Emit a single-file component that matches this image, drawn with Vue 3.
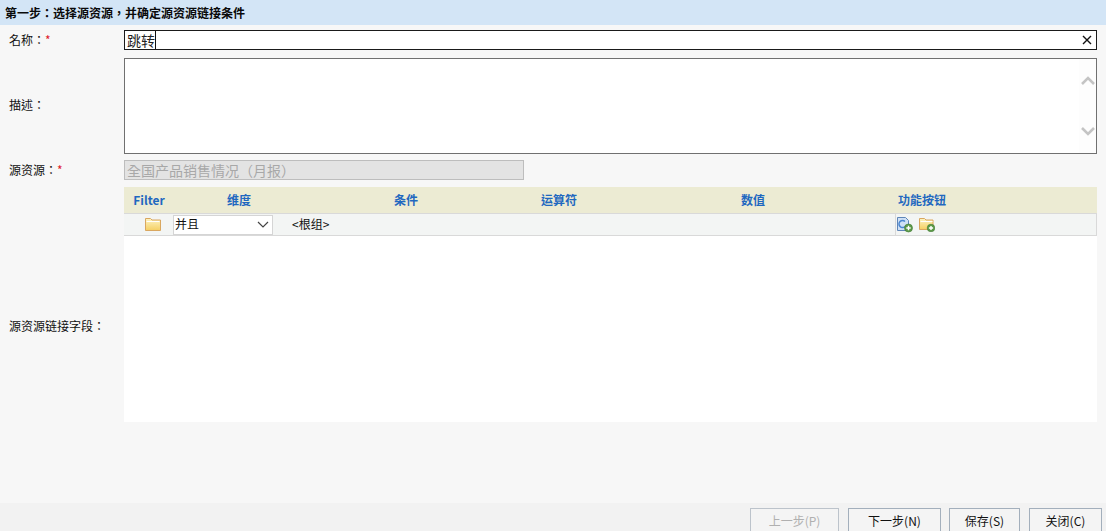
<script setup>
const columns = [
  { label: 'Filter', cls: '' },
  { label: '维度', cls: '' },
  { label: '条件', cls: '' },
  { label: '运算符', cls: '' },
  { label: '数值', cls: '' },
  { label: '功能按钮', cls: 'left' }
]
const buttons = [
  { label: '上一步(P)', cls: 'prev', disabled: true },
  { label: '下一步(N)', cls: 'next', disabled: false },
  { label: '保存(S)', cls: 'save', disabled: false },
  { label: '关闭(C)', cls: 'close', disabled: false }
]
</script>

<template>
  <div class="page">
    <div class="title">第一步：选择源资源，并确定源资源链接条件</div>
    <div class="form">
      <div class="label name-label">名称：<span class="req">*</span></div>
      <div class="name-input">
        <span class="value">跳转</span><span class="caret"></span>
        <svg class="clear" width="10" height="10" viewBox="0 0 10 10"><path d="M1 1l8 8M9 1l-8 8" stroke="#111" stroke-width="1.4" fill="none"/></svg>
      </div>

      <div class="label desc-label">描述：</div>
      <div class="textarea">
        <div class="scroll">
          <svg width="14" height="9" viewBox="0 0 14 9"><path d="M1 8l6-6 6 6" stroke="#c4c4c4" stroke-width="2.6" fill="none"/></svg>
          <svg width="14" height="9" viewBox="0 0 14 9"><path d="M1 1l6 6 6-6" stroke="#c4c4c4" stroke-width="2.6" fill="none"/></svg>
        </div>
      </div>

      <div class="label src-label">源资源：<span class="req">*</span></div>
      <div class="readonly">全国产品销售情况（月报）</div>

      <div class="label link-label">源资源链接字段：</div>
      <div class="table">
        <div class="thead">
          <div v-for="c in columns" :key="c.label" class="th" :class="c.cls">{{ c.label }}</div>
        </div>
        <div class="row">
          <div class="folder-cell">
            <svg width="16" height="13" viewBox="0 0 16 13">
              <defs><linearGradient id="fg" x1="0" y1="0" x2="0" y2="1"><stop offset="0" stop-color="#fdf4c4"/><stop offset="1" stop-color="#f5cf62"/></linearGradient></defs>
              <path d="M.5 12.500V.5h5l1.500 1.500h8.500v10.500z" fill="url(#fg)" stroke="#d9a760"/>
              <path d="M1.500 3.500h13" stroke="#fff" fill="none"/>
            </svg>
          </div>
          <div class="select">
            <span class="select-text">并且</span>
            <svg width="12" height="7" viewBox="0 0 12 7"><path d="M1 1l5 5 5-5" stroke="#444" stroke-width="1.200" fill="none"/></svg>
          </div>
          <div class="root">&lt;根组&gt;</div>
          <div class="actions">
            <svg width="18" height="17" viewBox="0 0 18 17">
              <path d="M1.500 1.500h8l3 3v10h-11z" fill="#cfe0f5" stroke="#5f86b8"/>
              <path d="M9 5.500a3.500 3.500 0 1 0 0 5" stroke="#4a86d0" stroke-width="1.600" fill="none"/>
              <circle cx="12.500" cy="12" r="4" fill="#5d9a48" stroke="#3f7a34" stroke-width=".6"/>
              <path d="M12.500 9.800v4.400M10.300 12h4.400" stroke="#fff" stroke-width="1.400"/>
            </svg>
            <svg class="add-folder" width="16" height="14" viewBox="0 0 16 14">
              <path d="M.5 11.500V.5h5l1.500 1.500h7v9.500z" fill="url(#fg)" stroke="#d9a760"/>
              <path d="M1.500 3.500h12" stroke="#fff" fill="none"/>
              <circle cx="12" cy="10" r="3.800" fill="#5d9a48" stroke="#3f7a34" stroke-width=".6"/>
              <path d="M12 7.900v4.200M9.900 10h4.200" stroke="#fff" stroke-width="1.400"/>
            </svg>
          </div>
        </div>
        <div class="blank"></div>
      </div>
    </div>
    <div class="footer">
      <button v-for="b in buttons" :key="b.label" class="btn" :class="b.cls" :disabled="b.disabled">{{ b.label }}</button>
    </div>
  </div>
</template>

<style>
html, body { margin: 0; background: #f7f7f7; overflow: hidden; }
</style>

<style scoped>
.page {
  width: 1106px;
  height: 531px;
  display: flex;
  flex-direction: column;
  overflow: hidden;
  background: #f7f7f7;
  color: #111;
  font: 12px/16px "Noto Sans CJK TC", "Liberation Sans", sans-serif;
}
.title {
  height: 25px;
  line-height: 25px;
  padding-left: 5px;
  flex: none;
  background: #d3e5f6;
  font-weight: 700;
  color: #0a0a0a;
}
.form {
  flex: 1;
  display: grid;
  grid-template-columns: 124px 973px;
  grid-template-rows: 20px 96px 20px 278px;
  grid-auto-rows: auto;
  padding-top: 5px;
  align-content: start;
}
.name-label, .name-input { margin-bottom: 8px; }
.name-label { align-self: start; padding-top: 2px; }
.form { grid-template-rows: 28px 102px 27px 278px; }
.label {
  padding-left: 9px;
}
.desc-label { align-self: start; padding-top: 39px; }
.src-label { align-self: start; padding-top: 2px; }
.link-label { align-self: center; }
.req { color: #e0202a; }
.name-input {
  box-sizing: border-box;
  height: 20px;
  border: 1px solid #1a1a1a;
  background: #fff;
  display: flex;
  align-items: center;
  padding: 0 4px 0 2px;
  font-size: 14px;
}
.value { color: #222; }
.caret {
  width: 1px;
  height: 18px;
  background: #111;
}
.clear { margin-left: auto; }
.textarea {
  box-sizing: border-box;
  height: 96px;
  border: 1px solid #707070;
  background: #fff;
  display: flex;
  justify-content: flex-end;
}
.scroll {
  width: 17px;
  background: #fdfdfd;
  display: flex;
  flex-direction: column;
  align-items: center;
  justify-content: space-between;
  padding: 17px 0 17px;
}
.readonly {
  box-sizing: border-box;
  width: 400px;
  height: 20px;
  border: 1px solid #bdbdbd;
  background: #e3e3e3;
  color: #a8a8a8;
  font-size: 14px;
  line-height: 18px;
  padding-left: 2px;
  white-space: nowrap;
  overflow: hidden;
}
.table { height: 235px; display: flex; flex-direction: column; }
.thead {
  height: 26px;
  flex: none;
  background: #ecebd3;
  display: grid;
  grid-template-columns: 50px 130px 204px 102px 286px 1fr;
  align-items: center;
}
.th {
  text-align: center;
  font-weight: 700;
  color: #1f68c0;
}
.th.left { text-align: left; padding-left: 2px; }
.row {
  box-sizing: border-box;
  height: 23px;
  flex: none;
  background: #f3f5f4;
  border: 1px solid #d9d9d9;
  border-left: 0;
  display: flex;
  align-items: center;
}
.folder-cell {
  width: 49px;
  flex: none;
  display: flex;
  justify-content: center;
  padding-left: 8px;
  box-sizing: border-box;
}
.select {
  box-sizing: border-box;
  width: 100px;
  height: 20px;
  flex: none;
  background: #fff;
  border: 1px solid #d5d5d5;
  display: flex;
  align-items: center;
  justify-content: space-between;
  padding: 0 3px 0 1px;
}
.select-text { line-height: 14px; padding-bottom: 2px; }
.root { margin-left: 19px; width: 603px; flex: none; line-height: 14px; padding-bottom: 2px; }
.actions {
  align-self: stretch;
  border-left: 1px solid #d9d9d9;
  display: flex;
  align-items: center;
  gap: 5px;
}
.add-folder { margin-top: 1px; }
.blank { flex: 1; background: #fff; }
.footer {
  flex: none;
  height: 28px;
  background: #f2f2f2;
  display: flex;
  padding-top: 5px;
  box-sizing: border-box;
}
.btn {
  box-sizing: border-box;
  height: 26px;
  flex: none;
  border: 1px solid #a3afbc;
  background: #f4f4f4;
  font: inherit;
  color: #111;
  padding: 0;
}
.btn:disabled { color: #b0b0b0; border-color: #bcc3cb; }
.prev { width: 89px; margin-left: 750px; }
.next { width: 93px; margin-left: 9px; }
.save { width: 71px; margin-left: 8px; }
.close { width: 73px; margin-left: 9px; }
</style>
